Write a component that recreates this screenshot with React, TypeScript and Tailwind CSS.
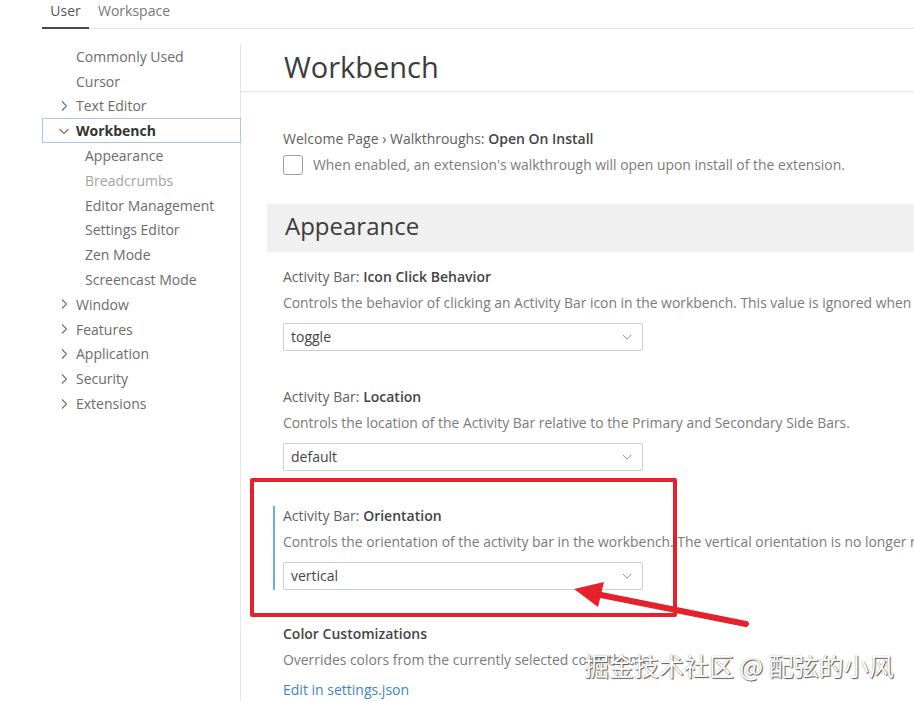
import React from "react"

const font = { fontFamily: '"Open Sans", "Noto Sans", sans-serif' }

type NavItem = { label: string; level: 0 | 1; chevron?: "right" | "down"; active?: boolean; dim?: boolean }

const nav: NavItem[] = [
  { label: "Commonly Used", level: 0 },
  { label: "Cursor", level: 0 },
  { label: "Text Editor", level: 0, chevron: "right" },
  { label: "Workbench", level: 0, chevron: "down", active: true },
  { label: "Appearance", level: 1 },
  { label: "Breadcrumbs", level: 1, dim: true },
  { label: "Editor Management", level: 1 },
  { label: "Settings Editor", level: 1 },
  { label: "Zen Mode", level: 1 },
  { label: "Screencast Mode", level: 1 },
  { label: "Window", level: 0, chevron: "right" },
  { label: "Features", level: 0, chevron: "right" },
  { label: "Application", level: 0, chevron: "right" },
  { label: "Security", level: 0, chevron: "right" },
  { label: "Extensions", level: 0, chevron: "right" },
]

function Chevron({ dir }: { dir: "right" | "down" }) {
  return (
    <svg width="16" height="16" viewBox="0 0 16 16" className="shrink-0">
      {dir === "right" ? (
        <polyline points="6,3.5 10.5,8 6,12.5" fill="none" stroke="#6f6f6f" strokeWidth="1.1" />
      ) : (
        <polyline points="3.5,6 8,10.5 12.5,6" fill="none" stroke="#6f6f6f" strokeWidth="1.1" />
      )}
    </svg>
  )
}

function Select({ value }: { value: string }) {
  return (
    <div className="w-[360px] h-[28px] border border-[#cecece] rounded-[2px] bg-white flex items-center justify-between pl-[7px] pr-[8px] text-[14px] text-[#444]">
      <span>{value}</span>
      <svg width="14" height="14" viewBox="0 0 16 16">
        <polyline points="3,5.5 8,10.5 13,5.5" fill="none" stroke="#8a8a8a" strokeWidth="1.1" />
      </svg>
    </div>
  )
}

function Setting({
  cat,
  name,
  desc,
  value,
  focused,
}: {
  cat: string
  name: string
  desc: string
  value: string
  focused?: boolean
}) {
  return (
    <div className={`ml-[6px] pl-[8px] border-l-2 ${focused ? "border-[#6aaee0]" : "border-transparent"}`}>
      <div className="h-5 leading-5 text-[14px] text-[#5f5f5f]">
        {cat} <span className="font-semibold text-[#444]">{name}</span>
      </div>
      <div className="mt-[6px] h-5 leading-5 text-[13.9px] text-[#7a7a7a]">{desc}</div>
      <div className="mt-[10px]">
        <Select value={value} />
      </div>
    </div>
  )
}

export default function App() {
  return (
    <div className="relative w-[914px] h-[701px] overflow-hidden bg-white whitespace-nowrap" style={font}>
      {/* tabs */}
      <div className="h-[29px] ml-[42px] flex items-start border-b border-[#e3e3e3] text-[14px]">
        <div className="h-[29px] w-[47px] flex items-start justify-center border-b-2 border-[#4a4a4a] -mb-px text-[#555] leading-[21px]">
          User
        </div>
        <div className="ml-[9px] leading-[21px] text-[#777]">Workspace</div>
      </div>

      <div className="flex mt-[15px] h-[660px]">
        {/* sidebar */}
        <div className="w-[241px] shrink-0 border-r border-[#e6e6e6] text-[14px]">
          <div className="ml-[42px]">
            {nav.map((item) => (
              <div
                key={item.label}
                className={`h-[24.8px] flex items-center ${item.active ? "border border-[#a9c6ee] -mr-px" : "border border-transparent"}`}
              >
                {item.level === 0 ? (
                  <div className="flex items-center pl-[13px]">
                    {item.chevron ? <Chevron dir={item.chevron} /> : <div className="w-4" />}
                    <span className={`ml-[4px] ${item.active ? "font-bold text-[#333]" : "text-[#6b6b6b]"}`}>{item.label}</span>
                  </div>
                ) : (
                  <span className={`pl-[42px] ${item.dim ? "text-[#a3a3a3]" : "text-[#6b6b6b]"}`}>{item.label}</span>
                )}
              </div>
            ))}
          </div>
        </div>

        {/* content */}
        <div className="flex-1 min-w-0">
          <div className="h-[48px] border-b border-[#e8e8e8] shadow-[0_1px_2px_rgba(0,0,0,0.04)] flex items-center pb-[2px] pl-[43px] text-[29px] text-[#3c3c3c]">
            Workbench
          </div>

          <div className="pl-[26px] pt-[37px]">
            <div className="ml-[6px] pl-[10px]">
              <div className="h-5 leading-5 text-[14px] text-[#5f5f5f]">
                Welcome Page › Walkthroughs: <span className="font-semibold text-[#444]">Open On Install</span>
              </div>
              <div className="mt-[6px] flex items-center">
                <div className="w-[20px] h-[20px] border border-[#9d9d9d] rounded-[3px] bg-white" />
                <span className="ml-[10px] text-[13.9px] text-[#7a7a7a]">
                  When enabled, an extension's walkthrough will open upon install of the extension.
                </span>
              </div>
            </div>

            <div className="mt-[28px] h-[48px] bg-[#f0f0f0] flex items-center pb-[4px] pl-[18px] text-[24px] text-[#3c3c3c]">
              Appearance
            </div>

            <div className="mt-[15px]">
              <Setting
                cat="Activity Bar:"
                name="Icon Click Behavior"
                desc="Controls the behavior of clicking an Activity Bar icon in the workbench. This value is ignored when the activity bar position is set"
                value="toggle"
              />
            </div>
            <div className="mt-[36px]">
              <Setting
                cat="Activity Bar:"
                name="Location"
                desc="Controls the location of the Activity Bar relative to the Primary and Secondary Side Bars."
                value="default"
              />
            </div>
            <div className="mt-[35px]">
              <Setting
                cat="Activity Bar:"
                name="Orientation"
                desc="Controls the orientation of the activity bar in the workbench. The vertical orientation is no longer recommended"
                value="vertical"
                focused
              />
            </div>
            <div className="mt-[34px] ml-[6px] pl-[10px]">
              <div className="h-5 leading-5 text-[14px] font-semibold text-[#444]">Color Customizations</div>
              <div className="mt-[6px] h-5 leading-5 text-[13.9px] text-[#7a7a7a]">
                Overrides colors from the currently selected color theme.
              </div>
              <div className="mt-[10px] h-5 leading-5 text-[14px] text-[#3f83c6]">Edit in settings.json</div>
            </div>
          </div>
        </div>
      </div>

      {/* annotation box */}
      <div className="absolute left-[250px] top-[478px] w-[427px] h-[139px] border-[4px] border-[#e3222b] rounded-[2px]" />

      {/* annotation arrow */}
      <svg className="absolute left-0 top-0 pointer-events-none" width="914" height="701">
        <line x1="746" y1="624" x2="596" y2="594" stroke="#e3222b" strokeWidth="6" strokeLinecap="round" />
        <polygon points="574,589 604,582 598,607" fill="#e3222b" />
      </svg>

      {/* watermark */}
      <div
        className="absolute left-[584px] top-[648px] text-[25px] leading-[34px] text-white"
        style={{ fontFamily: '"Noto Sans CJK SC", sans-serif', textShadow: "1px 1px 1px #555, 0 0 1px #888" }}
      >
        掘金技术社区 @ 配弦的小风
      </div>
    </div>
  )
}
